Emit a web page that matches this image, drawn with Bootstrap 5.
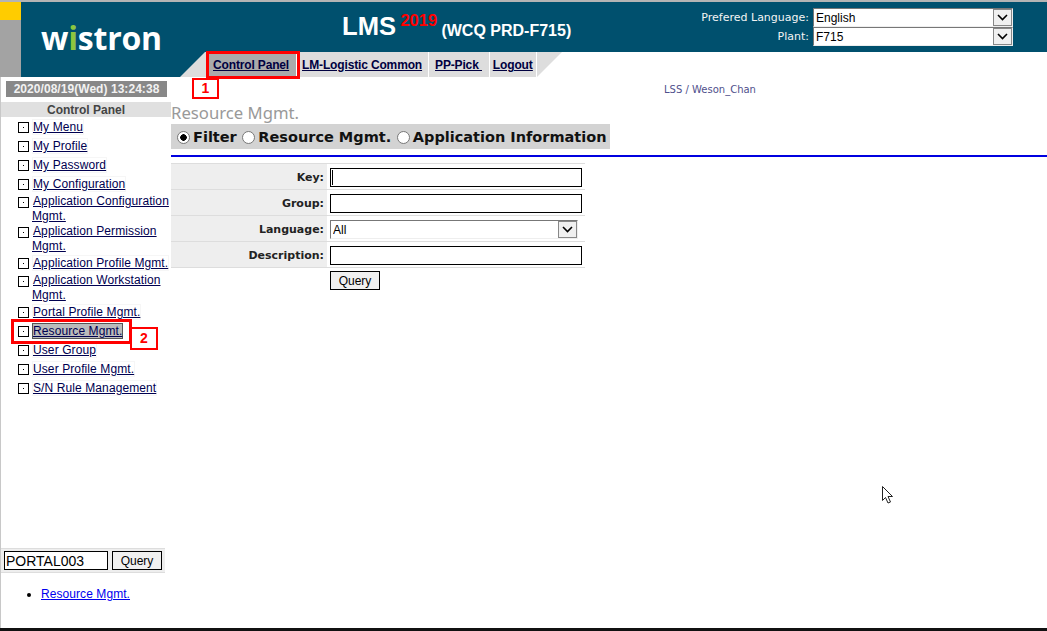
<!DOCTYPE html>
<html lang="en">
<head>
  <meta charset="UTF-8" />
  <meta name="viewport" content="width=device-width, initial-scale=1.0" />
  <title>LMS - Resource Mgmt.</title>
  <link href="https://cdn.jsdelivr.net/npm/bootstrap@5.3.3/dist/css/bootstrap.min.css" rel="stylesheet" />
  <style>
    html, body { height: 100%; overflow: hidden; }
    body { font-family: "Liberation Sans", Arial, sans-serif; font-size: 12px; color: #000; background: #fff; }
    .page-wrap { height: 631px; position: relative; border-top: 2px solid #b4b4b4; border-bottom: 3px solid #111; }

    /* header */
    .top-area { height: 75px; }
    .stripe { width: 21px; background: #a3a3a3; }
    .stripe-yellow { height: 18px; background: #ffcc00; }
    .head-band { height: 50px; background: #00506e; color: #fff; }
    .logo-cell { width: 159px; padding: 18px 0 0 20px; }
    .logo-text { font-family: "Open Sans", sans-serif; font-weight: 700; font-size: 32px; line-height: 36px; letter-spacing: -.2px; color: #fff; }
    .logo-text i { font-style: normal; color: #8cc63f; }
    .title-cell { width: 512px; padding: 6px 0 0 162px; white-space: nowrap; font-weight: 700; }
    .title-lms { font-size: 25.6px; line-height: 36px; }
    .title-year { font-size: 16.5px; color: #f00; position: relative; top: -9px; margin-left: 1px; }
    .title-sub { font-size: 16px; position: relative; top: 1px; margin-left: 1px; }
    .lang-cell { width: 334px; padding-top: 6px; font-family: "DejaVu Sans", sans-serif; font-size: 11px; }
    .lang-row { height: 19px; }
    .lang-label { width: 121px; text-align: right; padding: 1px 4px 0 0; color: #f4f4f4; }
    .win-select { height: 19px; padding: 1px 0 0 2px; border-radius: 0; font-family: "Liberation Sans", sans-serif; font-size: 12px; line-height: 15px; color: #000;
      border: 1px solid; border-color: #777 #eee #eee #777;
      background-color: #fff;
      background-image: url("data:image/svg+xml,%3Csvg xmlns='http://www.w3.org/2000/svg' width='19' height='17'%3E%3Crect x='.5' y='.5' width='18' height='16' fill='%23f0f0f0' stroke='%23888'/%3E%3Cpath d='M5 6l4.500 4.500L14 6' fill='none' stroke='%23000' stroke-width='1.600'/%3E%3C/svg%3E");
      background-repeat: no-repeat; background-position: right 0 center; background-size: 19px 17px; }
    .win-select:focus { box-shadow: none; }
    .lang-select { width: 200px; }
    .tab-row { height: 25px; }
    .tab-spacer { width: 159px; background: #00506e; }
    .tab-corner { width: 25px; display: block; }
    .tab-end { margin-left: 1px; }
    .tab-link { display: block; background: #ddd; font-weight: 700; line-height: 26px; letter-spacing: -.15px; color: #000040; white-space: nowrap; }
    .tab-link + .tab-link { margin-left: 1px; }
    .tab-link span { text-decoration: underline; white-space: pre; }
    .tab-active { background: linear-gradient(90deg, #ddd 3px, #aaa 3px); padding: 0 7px 0 8px; }
    .tab-lm { padding: 0 6px 0 5px; }
    .tab-pp { padding: 0 7px 0 6px; }
    .tab-out { padding: 0 3px; }

    /* sidebar */
    .body-area { height: 551px; }
    .side-col { width: 171px; border-left: 1px solid #c8c8c8; flex: none; }
    .date-bar { margin: 4px 4px 0 5px; height: 16px; line-height: 17px; letter-spacing: .05px; background: #888; color: #f2f2f2; font-weight: 700; text-align: center; white-space: nowrap; }
    .side-title { margin-top: 5px; height: 15px; line-height: 16px; background: #e0e0e0; color: #444; font-weight: 700; text-align: center; }
    .menu-list { padding: 1px 0 0 17px; margin: 0; list-style: none; line-height: 15px; letter-spacing: .1px; }
    .menu-list li { display: flex; padding: 2px 0; }
    .menu-list li.two-line { padding: 0; }
    .menu-box { flex: none; width: 11px; height: 11px; margin: 2px 4px 0 0; border: 1px solid #000; position: relative; }
    .two-line .menu-box { margin: 3px 3px 0 0; }
    .menu-box::after { content: ""; position: absolute; left: 4px; top: 4px; width: 1px; height: 1px; background: #000; }
    .menu-link { color: #000050; text-decoration: underline; box-shadow: 0 0 0 1px #f6f6f6; }
    .two-line .menu-link { box-shadow: none; }
    .two-line .menu-text { text-indent: 1px; margin-right: -3px; }
    .menu-sel { background: #bbb; box-shadow: 0 0 0 1px #555; }
    .side-search { margin-right: 6px; height: 25px; background: #eee; border-top: 1px solid #ddd; border-bottom: 1px solid #ddd; padding: 2px 0 0 3px; gap: 4px; }
    .side-input { width: 104px; height: 19px; padding: 0 1px; font-size: 14px; line-height: 17px; border: 1px solid #000; border-radius: 0; color: #000; }
    .plain-btn { height: 19px; width: 50px; padding: 0; font-size: 12px; line-height: 16px; color: #000; background: #f0f0f0; border: 1px solid #000; border-radius: 0; }
    .bread-list { margin: 13px 0 26px; padding-left: 40px; line-height: 16px; letter-spacing: .07px; }
    .bread-list a { color: #0000ee; }

    /* main */
    .user-line { height: 22px; padding: 6px 0 0 202px; text-align: center; font-family: "DejaVu Sans", sans-serif; font-size: 10px; line-height: 14px; color: #50508c; }
    .page-name { font-family: "Noto Sans", sans-serif; font-size: 16.7px; line-height: 24px; padding-top: 2px; color: #999; height: 25px; white-space: nowrap; }
    .view-tabs { width: 439px; height: 25px; background: #d3d3d3; padding-left: 6px; font-family: "DejaVu Sans", sans-serif; font-weight: 700; font-size: 14.5px; line-height: 26px; color: #111; white-space: nowrap; }
    .view-radio { appearance: none; width: 13px; height: 13px; margin: 0 3px 0 0; border: 1px solid #777; border-radius: 50%; background: #fff; position: relative; top: 2px; }
    .view-radio:checked { background: radial-gradient(circle, #000 3px, #fff 3.500px); }
    .view-opt { margin-right: .5px; }
    .blue-rule { height: 2px; background: #0000e0; margin-top: 6px; }
    .filter-form { width: 414px; margin-top: 6px; }
    .filter-row { height: 26px; border-top: 1px solid #ddd; }
    .filter-last { border-bottom: 1px solid #ddd; height: 27px; }
    .filter-label { width: 156px; background: #eee; text-align: right; padding: 1px 3px 0 0; font-family: "DejaVu Sans", sans-serif; font-size: 11px; font-weight: 700; color: #222; line-height: 25px; }
    .filter-field { padding: 4px 0 0 3px; position: relative; }
    .filter-input { width: 252px; height: 19px; padding: 0 2px; border: 1px solid #000; border-radius: 0; font-size: 12px; }
    .filter-select { width: 248px; }
    .caret-line { position: absolute; left: 5px; top: 6px; width: 1px; height: 15px; background: #000; }
    .filter-btn { margin: 3px 0 0 159px; }

    /* annotations on top of the screenshot */
    .mark-frame { position: absolute; border: 3px solid #f00; pointer-events: none; }
    .mark-tabs { left: 206px; top: 49px; width: 94px; height: 28px; }
    .mark-menu { left: 11px; top: 317px; width: 121px; height: 25px; }
    .mark-num { position: absolute; background: #fff; border: 2px solid #f00; color: #f00; font-weight: 700; font-size: 14px; text-align: center; }
    .mark-one { left: 192px; top: 76px; width: 27px; height: 21px; line-height: 17px; }
    .mark-two { left: 130px; top: 325px; width: 28px; height: 23px; line-height: 19px; }
    .mouse-arrow { position: absolute; left: 881px; top: 483px; }
  </style>
</head>
<body class="m-0">
  <div class="page-wrap">

    <!-- header -->
    <div class="d-flex top-area">
      <div class="stripe"><div class="stripe-yellow"></div></div>
      <div class="flex-grow-1">
        <div class="d-flex head-band">
          <div class="logo-cell"><span class="logo-text">w<i>i</i>stron</span></div>
          <div class="title-cell">
            <span class="title-lms">LMS</span>
            <span class="title-year">2019</span>
            <span class="title-sub">(WCQ PRD-F715)</span>
          </div>
          <div class="lang-cell">
            <div class="d-flex align-items-center lang-row">
              <div class="lang-label">Prefered Language:</div>
              <select class="form-select win-select lang-select"><option>English</option></select>
            </div>
            <div class="d-flex align-items-center lang-row">
              <div class="lang-label">Plant:</div>
              <select class="form-select win-select lang-select"><option>F715</option></select>
            </div>
          </div>
        </div>
        <div class="d-flex tab-row">
          <div class="tab-spacer"></div>
          <svg class="tab-corner" width="25" height="25" viewBox="0 0 25 25"><rect width="25" height="25" fill="#ddd"/><path d="M0 0H25L0 25Z" fill="#00506e"/></svg>
          <a class="tab-link tab-active" href="#"><span>Control Panel</span></a>
          <a class="tab-link tab-lm" href="#"><span>LM-Logistic Common</span></a>
          <a class="tab-link tab-pp" href="#"><span>PP-Pick </span></a>
          <a class="tab-link tab-out" href="#"><span>Logout</span></a>
          <svg class="tab-corner tab-end" width="25" height="25" viewBox="0 0 25 25"><path d="M0 0H25L0 25Z" fill="#ddd"/></svg>
        </div>
      </div>
    </div>

    <div class="d-flex body-area">
      <!-- sidebar -->
      <div class="side-col d-flex flex-column">
        <div class="date-bar">2020/08/19(Wed) 13:24:38</div>
        <div class="side-title">Control Panel</div>
        <ul class="menu-list">
          <li><span class="menu-box"></span><div class="menu-text"><a class="menu-link" href="#">My Menu</a></div></li>
          <li><span class="menu-box"></span><div class="menu-text"><a class="menu-link" href="#">My Profile</a></div></li>
          <li><span class="menu-box"></span><div class="menu-text"><a class="menu-link" href="#">My Password</a></div></li>
          <li><span class="menu-box"></span><div class="menu-text"><a class="menu-link" href="#">My Configuration</a></div></li>
          <li class="two-line"><span class="menu-box"></span><div class="menu-text"><a class="menu-link" href="#">Application Configuration Mgmt.</a></div></li>
          <li class="two-line"><span class="menu-box"></span><div class="menu-text"><a class="menu-link" href="#">Application Permission Mgmt.</a></div></li>
          <li><span class="menu-box"></span><div class="menu-text"><a class="menu-link" href="#">Application Profile Mgmt.</a></div></li>
          <li class="two-line"><span class="menu-box"></span><div class="menu-text"><a class="menu-link" href="#">Application Workstation Mgmt.</a></div></li>
          <li><span class="menu-box"></span><div class="menu-text"><a class="menu-link" href="#">Portal Profile Mgmt.</a></div></li>
          <li><span class="menu-box"></span><div class="menu-text"><a class="menu-link menu-sel" href="#">Resource Mgmt.</a></div></li>
          <li><span class="menu-box"></span><div class="menu-text"><a class="menu-link" href="#">User Group</a></div></li>
          <li><span class="menu-box"></span><div class="menu-text"><a class="menu-link" href="#">User Profile Mgmt.</a></div></li>
          <li><span class="menu-box"></span><div class="menu-text"><a class="menu-link" href="#">S/N Rule Management</a></div></li>
        </ul>
        <div class="mt-auto">
          <div class="d-flex side-search">
            <input class="form-control side-input" type="text" value="PORTAL003" />
            <button class="btn plain-btn" type="button">Query</button>
          </div>
          <ul class="bread-list">
            <li><a href="#">Resource Mgmt.</a></li>
          </ul>
        </div>
      </div>

      <!-- main -->
      <div class="flex-grow-1">
        <div class="user-line">LSS / Weson_Chan</div>
        <div class="page-name">Resource Mgmt.</div>
        <div class="view-tabs">
          <label class="view-opt"><input class="view-radio" type="radio" name="view" checked />Filter</label>
          <label class="view-opt"><input class="view-radio" type="radio" name="view" />Resource Mgmt.</label>
          <label><input class="view-radio" type="radio" name="view" />Application Information</label>
        </div>
        <div class="blue-rule"></div>
        <div class="filter-form">
          <div class="d-flex filter-row">
            <div class="filter-label">Key:</div>
            <div class="filter-field"><input class="form-control filter-input" type="text" /><span class="caret-line"></span></div>
          </div>
          <div class="d-flex filter-row">
            <div class="filter-label">Group:</div>
            <div class="filter-field"><input class="form-control filter-input" type="text" /></div>
          </div>
          <div class="d-flex filter-row">
            <div class="filter-label">Language:</div>
            <div class="filter-field"><select class="form-select win-select filter-select"><option>All</option></select></div>
          </div>
          <div class="d-flex filter-row filter-last">
            <div class="filter-label">Description:</div>
            <div class="filter-field"><input class="form-control filter-input" type="text" /></div>
          </div>
          <button class="btn plain-btn filter-btn" type="button">Query</button>
        </div>
      </div>
    </div>

    <!-- red annotations -->
    <div class="mark-frame mark-tabs"></div>
    <div class="mark-num mark-one">1</div>
    <div class="mark-frame mark-menu"></div>
    <div class="mark-num mark-two">2</div>

    <svg class="mouse-arrow" width="13" height="20" viewBox="0 0 13 20"><path d="M1.500 1.500V15.500L4.500 12.500L7 18L9.500 17L7 11.500H11.500Z" fill="#fff" stroke="#222" stroke-width="1"/></svg>
  </div>

  <script src="https://cdn.jsdelivr.net/npm/bootstrap@5.3.3/dist/js/bootstrap.bundle.min.js"></script>
</body>
</html>
